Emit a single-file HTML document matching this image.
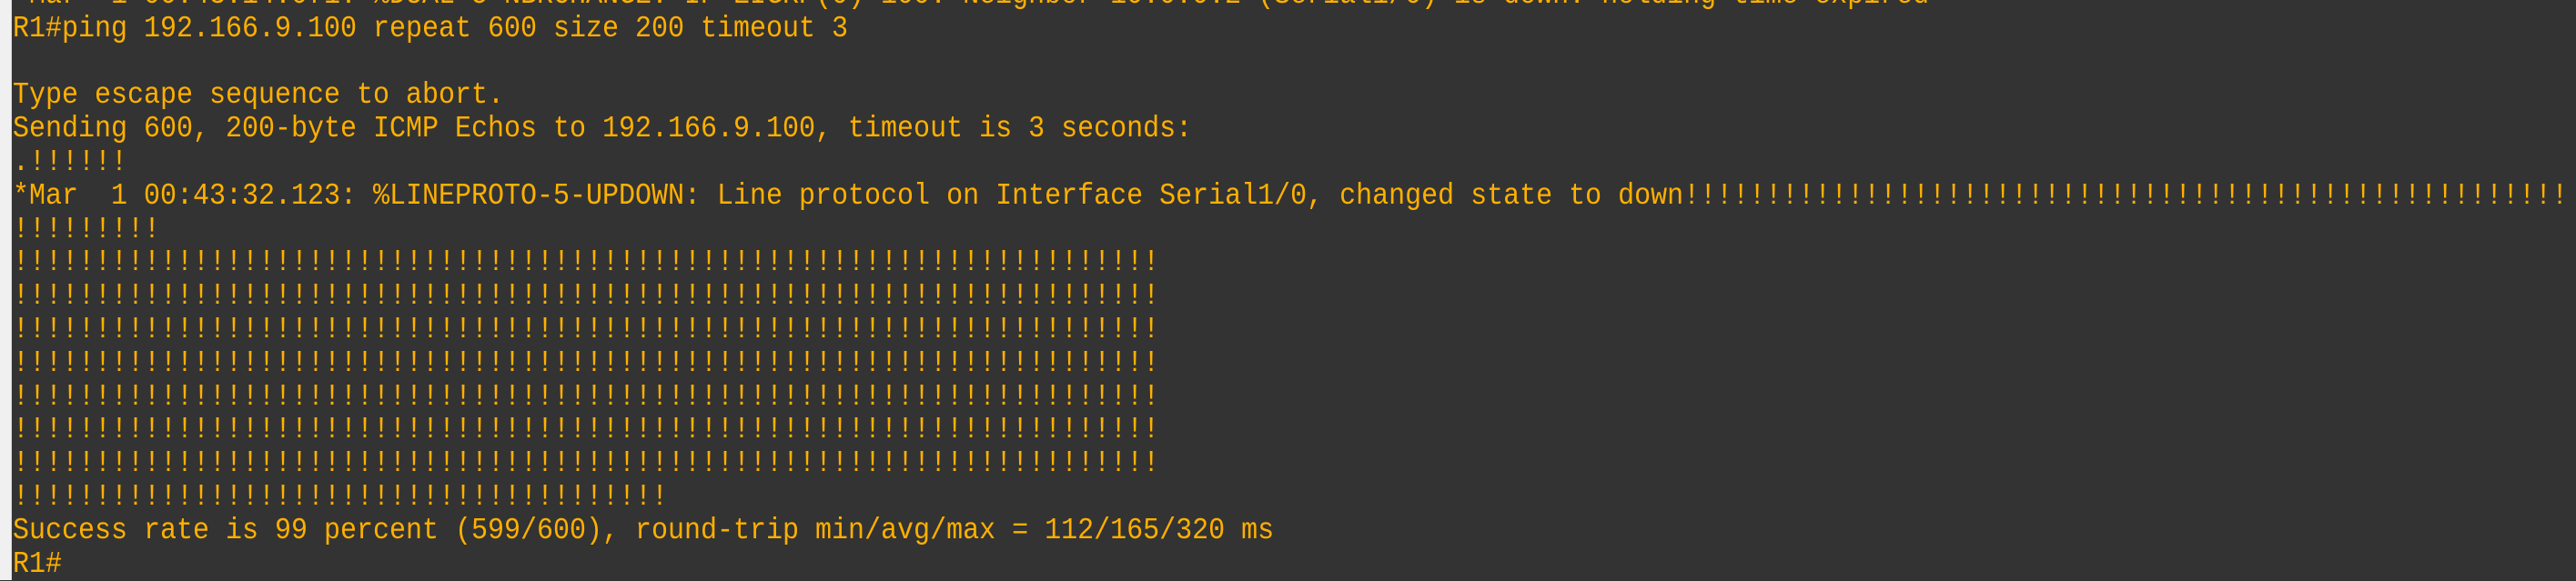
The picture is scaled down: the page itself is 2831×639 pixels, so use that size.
<!DOCTYPE html>
<html><head><meta charset="utf-8"><style>
html,body{margin:0;padding:0;width:2831px;height:638px;overflow:hidden;background:#333333}
.strip{position:absolute;left:0;top:0;width:12px;height:638px;background:#f0f0f0;border-right:1px solid #d8d8d8}
pre{position:absolute;left:14px;top:-23px;margin:0;font-family:"Liberation Mono",monospace;font-size:33px;line-height:36.8px;color:#ffb000;white-space:pre;transform:scaleX(0.909);transform-origin:0 0}
</style></head><body>
<div class="strip"></div>
<pre>*Mar  1 00:43:14.071: %DUAL-5-NBRCHANGE: IP-EIGRP(0) 100: Neighbor 10.0.0.2 (Serial1/0) is down: holding time expired
R1#ping 192.166.9.100 repeat 600 size 200 timeout 3

Type escape sequence to abort.
Sending 600, 200-byte ICMP Echos to 192.166.9.100, timeout is 3 seconds:
.!!!!!!
*Mar  1 00:43:32.123: %LINEPROTO-5-UPDOWN: Line protocol on Interface Serial1/0, changed state to down!!!!!!!!!!!!!!!!!!!!!!!!!!!!!!!!!!!!!!!!!!!!!!!!!!!!!!
!!!!!!!!!
!!!!!!!!!!!!!!!!!!!!!!!!!!!!!!!!!!!!!!!!!!!!!!!!!!!!!!!!!!!!!!!!!!!!!!
!!!!!!!!!!!!!!!!!!!!!!!!!!!!!!!!!!!!!!!!!!!!!!!!!!!!!!!!!!!!!!!!!!!!!!
!!!!!!!!!!!!!!!!!!!!!!!!!!!!!!!!!!!!!!!!!!!!!!!!!!!!!!!!!!!!!!!!!!!!!!
!!!!!!!!!!!!!!!!!!!!!!!!!!!!!!!!!!!!!!!!!!!!!!!!!!!!!!!!!!!!!!!!!!!!!!
!!!!!!!!!!!!!!!!!!!!!!!!!!!!!!!!!!!!!!!!!!!!!!!!!!!!!!!!!!!!!!!!!!!!!!
!!!!!!!!!!!!!!!!!!!!!!!!!!!!!!!!!!!!!!!!!!!!!!!!!!!!!!!!!!!!!!!!!!!!!!
!!!!!!!!!!!!!!!!!!!!!!!!!!!!!!!!!!!!!!!!!!!!!!!!!!!!!!!!!!!!!!!!!!!!!!
!!!!!!!!!!!!!!!!!!!!!!!!!!!!!!!!!!!!!!!!
Success rate is 99 percent (599/600), round-trip min/avg/max = 112/165/320 ms
R1#</pre>
</body></html>
